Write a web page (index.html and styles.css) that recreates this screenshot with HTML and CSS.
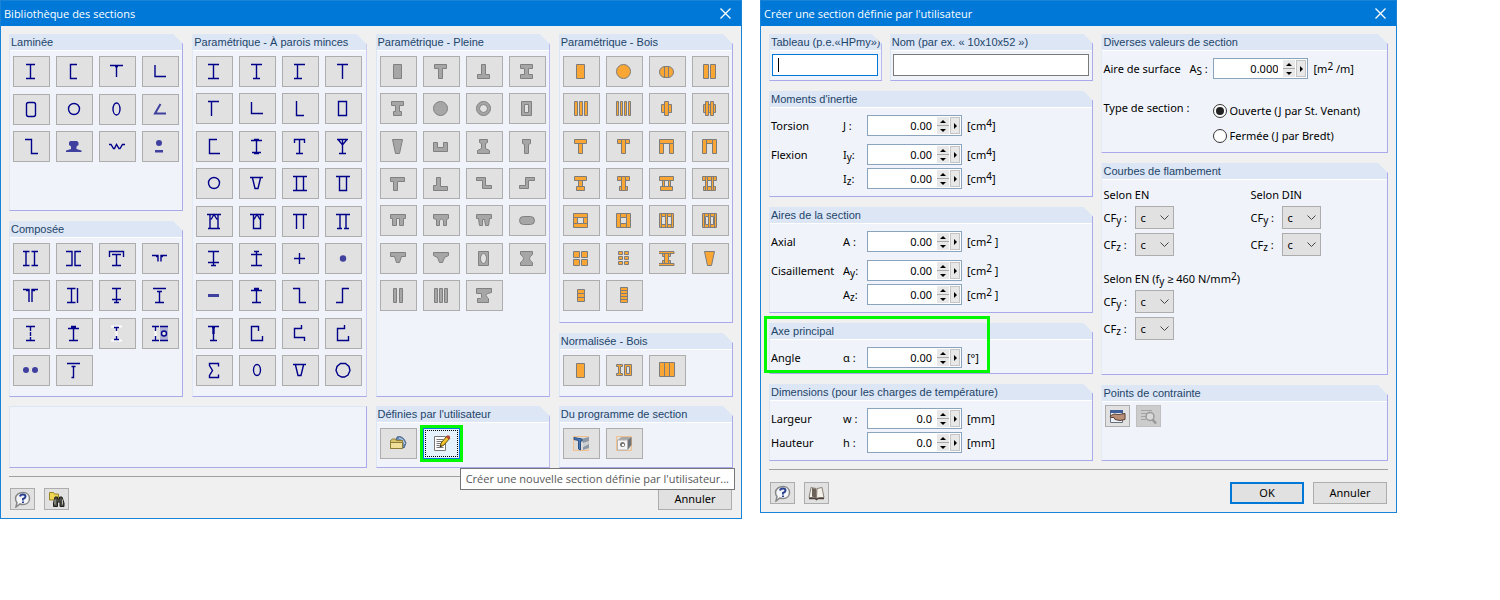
FILE: index.html
```html
<!DOCTYPE html>
<html lang="fr">
<head>
    <meta charset="UTF-8">
    <meta name="viewport" content="width=device-width, initial-scale=1.0">
    <title>Bibliothèque des sections</title>
    <link rel="stylesheet" href="styles.css">
</head>

<body>
    <!-- Section library -->
    <section class="dialog">
        <header class="titlebar">
            <h1>Bibliothèque des sections</h1>
            <button class="close" aria-label="Fermer"><svg viewBox="0 0 11 11"><path d="M.5 .5l10 10M10.5 .5l-10 10"/></svg></button>
        </header>

        <div class="library">
            <div class="stack">
                <div class="panel">
                    <h2>Laminée</h2>
                    <div class="tiles rows-3">
                        <button class="tile"><svg class="line" viewBox="0 0 19 19"><path d="M4 2.5h9M8.5 2.5v14M4 16.5h9"/></svg></button>
                        <button class="tile"><svg class="line" viewBox="0 0 19 19"><path d="M12 2.5H5.5v14H12"/></svg></button>
                        <button class="tile"><svg class="line" viewBox="0 0 19 19"><path d="M2 3.5h13M7 4.5h3M8.5 3.5V15"/></svg></button>
                        <button class="tile"><svg class="line" viewBox="0 0 19 19"><path d="M4 3v11.5h11"/></svg></button>
                        <button class="tile"><svg class="line" viewBox="0 0 19 19"><rect x="4.5" y="2.5" width="9" height="14" rx="2"/></svg></button>
                        <button class="tile"><svg class="line" viewBox="0 0 19 19"><circle cx="9" cy="9" r="5.5"/></svg></button>
                        <button class="tile"><svg class="line" viewBox="0 0 19 19"><ellipse cx="8.5" cy="9" rx="3.5" ry="6"/></svg></button>
                        <button class="tile"><svg class="line soft" viewBox="0 0 19 19"><path d="M9.5 4L4 13.5h11"/></svg></button>
                        <button class="tile"><svg class="line" viewBox="0 0 19 19"><path d="M3 2.5h6.5v14H16"/></svg></button>
                        <button class="tile"><svg class="blob" viewBox="0 0 19 19"><path d="M5 4h7l1.5 1.5V8l-2 1.5V12l5 1.5V15H1v-1.5L6 12V9.5L4 8V5.5z"/></svg></button>
                        <button class="tile"><svg class="line" viewBox="0 0 19 19"><path d="M1 7.5h2l2.500 4h1l2-4 2.500 4h1l2.500-4H17"/></svg></button>
                        <button class="tile"><svg class="blob" viewBox="0 0 19 19"><circle cx="8" cy="6" r="3"/><path d="M4 13h8v2.500H4z"/></svg></button>
                    </div>
                </div>
                <div class="panel grow">
                    <h2>Composée</h2>
                    <div class="tiles rows-4">
                        <button class="tile"><svg class="line" viewBox="0 0 19 19"><path d="M1 2.500h6.500M4 2.500v14M1 16.500h6.500M9.500 2.500H16M12.500 2.500v14M9.500 16.500H16"/></svg></button>
                        <button class="tile"><svg class="line" viewBox="0 0 19 19"><path d="M1 2.500h6v14H1M16 2.500h-6v14H16"/></svg></button>
                        <button class="tile"><svg class="line" viewBox="0 0 19 19"><path d="M1.500 8V2.500h14V8M4 5.500h9M8.500 5.500v11M4 16.500h9"/></svg></button>
                        <button class="tile"><svg class="line" viewBox="0 0 19 19"><path d="M1 6.500h6v6M16 6.500h-6v6M5 7.500h2M10 7.500h2"/></svg></button>
                        <button class="tile"><svg class="line" viewBox="0 0 19 19"><path d="M1 3.500h6V16M16 3.500h-6V16M4 4.500h3M10 4.500h3"/></svg></button>
                        <button class="tile"><svg class="line" viewBox="0 0 19 19"><path d="M2 2.500h8.500M6.500 2.500v14M2 16.500h8.500M12.500 2v15"/></svg></button>
                        <button class="tile"><svg class="line" viewBox="0 0 19 19"><path d="M4 2.500h9M8.500 2.500v14M4 13.500h9M6 16.500h5"/></svg></button>
                        <button class="tile"><svg class="line" viewBox="0 0 19 19"><path d="M2 2.500h13M6 5.500h5M8.500 5.500v11M4 16.500h9"/></svg></button>
                        <button class="tile"><svg class="line" viewBox="0 0 19 19"><path d="M4 2.500h9M4 16.500h9"/><path d="M8.500 3v13" stroke-dasharray="4 1"/></svg></button>
                        <button class="tile"><svg class="line" viewBox="0 0 19 19"><path d="M6 2.500h5M6 3.500h5M3 4.500h11M8.500 4.500v12M4 16.500h9"/></svg></button>
                        <button class="tile"><svg class="line" viewBox="0 0 19 19"><path class="white" d="M3 2.500h11M8.500 2v15M3 16.500h11"/><path d="M6 3.500h5M8.500 3.500V7M6 15.500h5M8.500 12v3"/></svg></button>
                        <button class="tile"><svg class="line" viewBox="0 0 19 19"><path class="tint" d="M9 2.500h8v14H9z"/><path class="white" d="M4.500 3v13"/><path d="M1 2.500h7M4.500 3v4M4.500 12v4M1 16.500h7M9 2.500h8M9 16.500h8"/><circle class="hole" cx="13" cy="9.500" r="2.500"/></svg></button>
                        <button class="tile"><svg class="blob" viewBox="0 0 19 19"><circle cx="4" cy="9" r="3"/><circle cx="13" cy="9" r="3"/></svg></button>
                        <button class="tile"><svg class="line" viewBox="0 0 19 19"><path d="M2 2.500h13M6.500 5.500h4M8.500 5.500v11h-2"/></svg></button>
                    </div>
                </div>
            </div>

            <div class="panel">
                <h2>Paramétrique - À parois minces</h2>
                <div class="tiles rows-9">
                    <button class="tile"><svg class="line" viewBox="0 0 19 19"><path d="M3 2.500h11M8.500 2.500v14M3 16.500h11"/></svg></button>
                    <button class="tile"><svg class="line" viewBox="0 0 19 19"><path d="M3 2.500h11M8.500 2.500v14M5 16.500h7"/></svg></button>
                    <button class="tile"><svg class="line" viewBox="0 0 19 19"><path d="M3 2.500h11M6.500 2.500v14M3 16.500h8"/></svg></button>
                    <button class="tile"><svg class="line" viewBox="0 0 19 19"><path d="M3 2.500h11M8.500 2.500V17"/></svg></button>
                    <button class="tile"><svg class="line" viewBox="0 0 19 19"><path d="M3 2.500h11M6.500 2.500V17"/></svg></button>
                    <button class="tile"><svg class="line" viewBox="0 0 19 19"><path d="M3.500 3v11.500H15"/></svg></button>
                    <button class="tile"><svg class="line" viewBox="0 0 19 19"><path d="M5.500 2v14.500H13"/></svg></button>
                    <button class="tile"><svg class="line" viewBox="0 0 19 19"><path d="M4.500 2.500h8v14h-8z"/></svg></button>
                    <button class="tile"><svg class="line" viewBox="0 0 19 19"><path d="M12 2.500H4.500v14H15"/></svg></button>
                    <button class="tile"><svg class="line" viewBox="0 0 19 19"><path d="M6 2.500h5M3 3.500h11M8.500 3.500v13M4 15.500h9M6 16.500h5"/></svg></button>
                    <button class="tile"><svg class="line" viewBox="0 0 19 19"><path d="M3.500 6V2.500h10V6M8.500 2.500v14M5 16.500h7"/></svg></button>
                    <button class="tile"><svg class="line" viewBox="0 0 19 19"><path d="M3 2.500h11M4.500 3l4 5 4-5M8.500 2.500v14M5 16.500h7"/></svg></button>
                    <button class="tile"><svg class="line" viewBox="0 0 19 19"><circle cx="9" cy="9" r="5.500"/></svg></button>
                    <button class="tile"><svg class="line" viewBox="0 0 19 19"><path d="M2 3.500h13M4.500 4L7 14.500h3L12.500 4"/></svg></button>
                    <button class="tile"><svg class="line" viewBox="0 0 19 19"><path d="M2 2.500h14M5.500 2.500v14M12.500 2.500v14M2 16.500h14"/></svg></button>
                    <button class="tile"><svg class="line" viewBox="0 0 19 19"><path d="M2 2.500h14M5.500 2.500v14h7v-14"/></svg></button>
                    <button class="tile"><svg class="line" viewBox="0 0 19 19"><path d="M2 2.500h14M5 2.500v14M13 2.500v14M3 16.500h12M6 7.500l3-5 3 5"/></svg></button>
                    <button class="tile"><svg class="line" viewBox="0 0 19 19"><path d="M2 2.500h14M5.500 2.500v14h7v-14M6 7.500l3-5 3 5"/></svg></button>
                    <button class="tile"><svg class="line" viewBox="0 0 19 19"><path d="M2 2.500h14M5.500 2.500V17M12.500 2.500V17"/></svg></button>
                    <button class="tile"><svg class="line" viewBox="0 0 19 19"><path d="M2 2.500h14M6 2.500v14M12 2.500v14M3 16.500h5M10 16.500h5"/></svg></button>
                    <button class="tile"><svg class="line" viewBox="0 0 19 19"><path d="M3 2.500h11M8.500 2.500v14M3 13.500h11M6 16.500h5"/></svg></button>
                    <button class="tile"><svg class="line" viewBox="0 0 19 19"><path d="M6 2.500h5M3 5.500h11M8.500 2.500v14M3 16.500h11"/></svg></button>
                    <button class="tile"><svg class="line" viewBox="0 0 19 19"><path d="M3 9.500h11M8.500 4v11"/></svg></button>
                    <button class="tile"><svg class="blob" viewBox="0 0 19 19"><circle cx="9" cy="9.500" r="3.200"/></svg></button>
                    <button class="tile"><svg class="blob" viewBox="0 0 19 19"><path d="M3 8h11v3H3z"/></svg></button>
                    <button class="tile"><svg class="line" viewBox="0 0 19 19"><path d="M6 2.500h5M6 3.500h5M3 4.500h11M8.500 4.500v12M4 16.500h9"/></svg></button>
                    <button class="tile"><svg class="line" viewBox="0 0 19 19"><path d="M2 2.500h6.500v14H15"/></svg></button>
                    <button class="tile"><svg class="line" viewBox="0 0 19 19"><path d="M15 2.500H8.500v14H2"/></svg></button>
                    <button class="tile"><svg class="line" viewBox="0 0 19 19"><path d="M3 2.500h11M7 3.500h3M8 4v6M9 4v6M8.500 2.500v14M5 16.500h7"/></svg></button>
                    <button class="tile"><svg class="line" viewBox="0 0 19 19"><path d="M10.500 7V2.500h-7v14h11V12"/></svg></button>
                    <button class="tile"><svg class="line" viewBox="0 0 19 19"><path d="M10.500 1v3.500h-7v9h10V17"/></svg></button>
                    <button class="tile"><svg class="line" viewBox="0 0 19 19"><path d="M10.500 1v3.500h-7v12h11V12"/></svg></button>
                    <button class="tile"><svg class="line" viewBox="0 0 19 19"><path d="M13.500 5.500v-3h-9v2l3 5-3 5v2h9v-3"/></svg></button>
                    <button class="tile"><svg class="line" viewBox="0 0 19 19"><ellipse cx="9" cy="9" rx="3.500" ry="5.500"/></svg></button>
                    <button class="tile"><svg class="line" viewBox="0 0 19 19"><path d="M2 3.500h13M4.500 4L7 14.500h3L12.500 4"/></svg></button>
                    <button class="tile"><svg class="line" viewBox="0 0 19 19"><path d="M6.500 2.500h5l3.500 3 1 4-2 4.500-3.500 2h-3L4 14 2 9.500l1-4z"/></svg></button>
                </div>
            </div>

            <div class="panel">
                <h2>Paramétrique - Pleine</h2>
                <div class="tiles rows-7">
                    <button class="tile"><svg class="solid" viewBox="0 0 19 19"><path d="M4.500 2.500h8v14h-8z"/></svg></button>
                    <button class="tile"><svg class="solid" viewBox="0 0 19 19"><path d="M2.500 2.500h12v4h-4v10h-4v-10h-4z"/></svg></button>
                    <button class="tile"><svg class="solid" viewBox="0 0 19 19"><path d="M6.500 2.500h4v10h4v4h-12v-4h4z"/></svg></button>
                    <button class="tile"><svg class="solid" viewBox="0 0 19 19"><path d="M2.500 2.500h12v4h-4v6h4v4h-12v-4h4v-6h-4z"/></svg></button>
                    <button class="tile"><svg class="solid" viewBox="0 0 19 19"><path d="M2.500 2.500h12v4h-4v6h2v4h-8v-4h2v-6h-4z"/></svg></button>
                    <button class="tile"><svg class="solid" viewBox="0 0 19 19"><circle cx="8.500" cy="9.500" r="7"/></svg></button>
                    <button class="tile"><svg class="solid" viewBox="0 0 19 19"><circle cx="8.500" cy="9.500" r="7"/><circle class="gap" cx="8.500" cy="9.500" r="4"/></svg></button>
                    <button class="tile"><svg class="solid" viewBox="0 0 19 19"><path d="M3.500 2.500h10v14h-10z"/><path class="gap" d="M6.500 5.500h4v8h-4z"/></svg></button>
                    <button class="tile"><svg class="solid" viewBox="0 0 19 19"><path d="M3.500 2.500h10l-3 14h-4z"/></svg></button>
                    <button class="tile"><svg class="solid" viewBox="0 0 19 19"><path d="M1.500 5.500h4v5h6v-5h4v9h-14z"/></svg></button>
                    <button class="tile"><svg class="solid" viewBox="0 0 19 19"><path d="M4.500 2.500h8v3l-2 1v5l4 2v3h-12v-3l4-2v-5l-2-1z"/></svg></button>
                    <button class="tile"><svg class="solid" viewBox="0 0 19 19"><path d="M4.500 2.500h8v4l-2 1v9h-4v-9l-2-1z"/></svg></button>
                    <button class="tile"><svg class="solid" viewBox="0 0 19 19"><path d="M1.500 3.500h14v4h-7v9h-4v-9h-3z"/></svg></button>
                    <button class="tile"><svg class="solid" viewBox="0 0 19 19"><path d="M4.500 3.500h4v9h7v4h-14v-5h3z"/></svg></button>
                    <button class="tile"><svg class="solid" viewBox="0 0 19 19"><path d="M1.500 3.500h9v8h6v3h-9v-8h-6z"/></svg></button>
                    <button class="tile"><svg class="solid" viewBox="0 0 19 19"><path d="M16.500 3.500h-9v8h-6v3h9v-8h6z"/></svg></button>
                    <button class="tile"><svg class="solid" viewBox="0 0 19 19"><path d="M1.500 3.500h15v4h-2v7h-4v-7h-3v7h-4v-7h-2z"/></svg></button>
                    <button class="tile"><svg class="solid" viewBox="0 0 19 19"><path d="M1.500 3.500h15v4l-2 1v6h-3v-5q-2-3-4 0v5h-3v-6l-3-1z"/></svg></button>
                    <button class="tile"><svg class="solid" viewBox="0 0 19 19"><path d="M1.500 3.500h15v4h-2l-1 7h-3l-1-6h-2v6h-3l-1-7h-2z"/></svg></button>
                    <button class="tile"><svg class="solid" viewBox="0 0 19 19"><rect x="1.500" y="5.500" width="15" height="8" rx="4"/></svg></button>
                    <button class="tile"><svg class="solid" viewBox="0 0 19 19"><path d="M1.500 3.500h15v4h-4l-2 6h-3l-2-6h-4z"/></svg></button>
                    <button class="tile"><svg class="solid" viewBox="0 0 19 19"><path d="M1.500 3.500h15v3l-4 2-2 5h-3l-2-5-4-2z"/></svg></button>
                    <button class="tile"><svg class="solid" viewBox="0 0 19 19"><path d="M3.500 2.500h10v14h-10z"/><ellipse class="gap" cx="8.500" cy="9.500" rx="3" ry="5"/></svg></button>
                    <button class="tile"><svg class="solid" viewBox="0 0 19 19"><path d="M2.500 2.500h12v3q-6 4 0 8v3h-12v-3q6-4 0-8z"/></svg></button>
                    <button class="tile"><svg class="solid" viewBox="0 0 19 19"><path d="M4.500 2.500h3v14h-3zM10.500 2.500h3v14h-3z"/></svg></button>
                    <button class="tile"><svg class="solid" viewBox="0 0 19 19"><path d="M2.500 2.500h3v14h-3zM7.500 2.500h3v14h-3zM12.500 2.500h3v14h-3z"/></svg></button>
                    <button class="tile"><svg class="solid" viewBox="0 0 19 19"><path d="M1.500 2.500h15v4l-4 1q-3 2 0 4l1 1v4h-11v-4h3l1-1v-4h-5z"/></svg></button>
                </div>
            </div>

            <div class="stack">
                <div class="panel">
                    <h2>Paramétrique - Bois</h2>
                    <div class="tiles rows-7">
                        <button class="tile"><svg class="wood" viewBox="0 0 19 19"><path d="M4.500 2.500h8v14h-8z"/></svg></button>
                        <button class="tile"><svg class="wood" viewBox="0 0 19 19"><circle cx="8.500" cy="9.500" r="7"/></svg></button>
                        <button class="tile"><svg class="wood" viewBox="0 0 19 19"><rect x="1.500" y="4.500" width="14" height="11" rx="5.500"/><path d="M6.500 4.500v11M10.500 4.500v11"/></svg></button>
                        <button class="tile"><svg class="wood" viewBox="0 0 19 19"><path d="M2.500 2.500h5v14h-5zM9.500 2.500h5v14h-5z"/></svg></button>
                        <button class="tile"><svg class="wood" viewBox="0 0 19 19"><path d="M2.500 2.500h3v14h-3zM7.500 2.500h3v14h-3zM12.500 2.500h3v14h-3z"/></svg></button>
                        <button class="tile"><svg class="wood" viewBox="0 0 19 19"><path d="M1.500 2.500h2v14h-2zM5.500 2.500h2v14h-2zM9.500 2.500h2v14h-2zM13.500 2.500h2v14h-2z"/></svg></button>
                        <button class="tile"><svg class="wood" viewBox="0 0 19 19"><path d="M3.500 5.500h10v8h-10z"/><path d="M6.500 2.500h4v14h-4z"/></svg></button>
                        <button class="tile"><svg class="wood" viewBox="0 0 19 19"><path d="M2.500 5.500h12v8h-12z"/><path d="M4.500 2.500h3v14h-3zM9.500 2.500h3v14h-3z"/></svg></button>
                        <button class="tile"><svg class="wood" viewBox="0 0 19 19"><path d="M2.500 2.500h12v4h-12zM6.500 6.500h4v10h-4z"/></svg></button>
                        <button class="tile"><svg class="wood" viewBox="0 0 19 19"><path d="M2.500 2.500h12v4h-12z"/><path d="M6.500 2.500h4v14h-4z"/></svg></button>
                        <button class="tile"><svg class="wood" viewBox="0 0 19 19"><path d="M1.500 2.500h14v4h-14zM1.500 6.500h4v10h-4zM11.500 6.500h4v10h-4z"/></svg></button>
                        <button class="tile"><svg class="wood" viewBox="0 0 19 19"><path d="M5.500 2.500h6v4h-6zM1.500 2.500h4v14h-4zM11.500 2.500h4v14h-4z"/></svg></button>
                        <button class="tile"><svg class="wood" viewBox="0 0 19 19"><path d="M2.500 2.500h12v4h-12zM6.500 6.500h4v6h-4zM4.500 12.500h8v4h-8z"/></svg></button>
                        <button class="tile"><svg class="wood" viewBox="0 0 19 19"><path d="M2.500 2.500h12v4h-12zM4.500 12.500h8v4h-8z"/><path d="M6.500 2.500h4v14h-4z"/></svg></button>
                        <button class="tile"><svg class="wood" viewBox="0 0 19 19"><path d="M1.500 2.500h14v4h-14zM2.500 12.500h12v4h-12zM4.500 6.500h2v6h-2zM10.500 6.500h2v6h-2z"/></svg></button>
                        <button class="tile"><svg class="wood" viewBox="0 0 19 19"><path d="M1.500 2.500h14v4h-14zM2.500 12.500h12v4h-12z"/><path d="M4.500 2.500h2v14h-2zM10.500 2.500h2v14h-2z"/></svg></button>
                        <button class="tile"><svg class="wood" viewBox="0 0 19 19"><path d="M1.500 2.500h14v14h-14zM1.500 6.500h14v6h-14z"/><path class="gap" d="M5.500 6.500h6v6h-6z"/></svg></button>
                        <button class="tile"><svg class="wood" viewBox="0 0 19 19"><path d="M1.500 2.500h14v14h-14zM5.500 2.500h6v14h-6z"/><path class="gap" d="M5.500 6.500h6v6h-6z"/></svg></button>
                        <button class="tile"><svg class="wood" viewBox="0 0 19 19"><path d="M1.500 2.500h14v14h-14zM3.500 2.500v14M7.500 2.500h2v14h-2zM13.500 2.500v14"/><path class="gap" d="M3.500 5.500h4v8h-4zM9.500 5.500h4v8h-4z"/></svg></button>
                        <button class="tile"><svg class="wood" viewBox="0 0 19 19"><path d="M1.500 2.500h14v14h-14zM3.500 2.500v14M7.500 2.500h2v14h-2zM13.500 2.500v14"/><path class="gap" d="M4.500 5.500h3v8h-3zM9.500 5.500h3v8h-3z"/></svg></button>
                        <button class="tile"><svg class="wood" viewBox="0 0 19 19"><path d="M1.500 2.500h6v6h-6zM9.500 2.500h6v6h-6zM1.500 10.500h6v6h-6zM9.500 10.500h6v6h-6z"/></svg></button>
                        <button class="tile"><svg class="wood" viewBox="0 0 19 19"><path d="M3.500 2.500h4v3h-4zM9.500 2.500h4v3h-4zM3.500 7.500h4v3h-4zM9.500 7.500h4v3h-4zM3.500 12.500h4v3h-4zM9.500 12.500h4v3h-4z"/></svg></button>
                        <button class="tile"><svg class="wood" viewBox="0 0 19 19"><path d="M4.500 4.500h8v3h-8zM4.500 11.500h8v3h-8z"/><path d="M6.500 4.500h4v10h-4z"/><path d="M1 2.500h15v2H1M1 16.500h15v-2H1"/></svg></button>
                        <button class="tile"><svg class="wood" viewBox="0 0 19 19"><path d="M3.500 2.500h10l-3 14h-4z"/></svg></button>
                        <button class="tile"><svg class="wood" viewBox="0 0 19 19"><path d="M5.500 3.500h7v12h-7zM5.500 7.500h7v4h-7z"/></svg></button>
                        <button class="tile"><svg class="wood" viewBox="0 0 19 19"><path d="M5.500 1.500h7v15h-7zM5.500 4.500h7M5.500 7.500h7M5.500 10.500h7M5.500 13.500h7"/></svg></button>
                    </div>
                </div>
                <div class="panel grow">
                    <h2>Normalisée - Bois</h2>
                    <div class="tiles">
                        <button class="tile"><svg class="wood" viewBox="0 0 19 19"><path d="M4.500 2.500h8v14h-8z"/></svg></button>
                        <button class="tile"><svg class="wood" viewBox="0 0 19 19"><path d="M1.500 3.500h6v2h-2v7h2v2h-6v-2h2v-7h-2z"/><path d="M9.500 3.500h7v11h-7z"/><path class="gap" d="M11.500 5.500h3v7h-3z"/></svg></button>
                        <button class="tile"><svg class="wood" viewBox="0 0 19 19"><path d="M1.500 1.500h15v14h-15zM6.500 1.500h5v14h-5z"/></svg></button>
                    </div>
                </div>
            </div>

            <div class="panel blank"></div>
            <div class="panel">
                <h2>Définies par l'utilisateur</h2>
                <div class="tiles">
                    <button class="tile" aria-label="Ouvrir"><svg viewBox="0 0 19 19">
                        <path d="M8 3q6-2 9 6l-2 5-8-6z" fill="#6f8fb5" stroke="#44618a"/>
                        <path d="M10 4q4 0 6 6" fill="none" stroke="#c9d9ea"/>
                        <path d="M1.500 6.500l2-1.500h3l1 1.500h6v8h-12z" fill="#d9c46c" stroke="#8d7c3c"/>
                        <path d="M1.500 14.500v-6h12v6z" fill="#efdf98" stroke="#8d7c3c"/>
                    </svg></button>
                    <button class="tile active" aria-label="Nouvelle section" aria-describedby="new-tip"><svg viewBox="0 0 19 19">
                        <path d="M2.500 2.500h11v14h-11z" fill="#fff" stroke="#777"/>
                        <path d="M4.500 5.500h7M4.500 7.500h6M4.500 9.500h4M4.500 11.500h3M4.500 13.500h7" stroke="#777"/>
                        <path d="M8 13l1-4 6-7 3 2-6 7z" fill="#f0c52c" stroke="#5d4a14"/>
                        <path d="M14 3l1-1.500h2l1 1V4l-1 1.500z" fill="#b8443a"/>
                        <path d="M8 13l.5-2 1.500 1z" fill="#222"/>
                    </svg></button>
                </div>
            </div>
            <div class="panel">
                <h2>Du programme de section</h2>
                <div class="tiles">
                    <button class="tile" aria-label="Profil mince"><svg viewBox="0 0 19 19">
                        <path d="M1.500 2.500h15v14h-15z" fill="#dedad5" stroke="#f0c08e"/>
                        <path d="M9 5l8-2v4l-6 2zM11 13l6-3v4l-6 2z" fill="#8d98a6"/>
                        <path d="M11 9.500l6-2v2l-6 3z" fill="#c9ced6"/>
                        <path d="M2 3.500l8 1.500v2L8.500 7v9l-2-1V6.500L2 5.500z" fill="#4a78b5" stroke="#2b5288"/>
                    </svg></button>
                    <button class="tile" aria-label="Profil massif"><svg viewBox="0 0 19 19">
                        <path d="M1.500 2.500h15v14h-15z" fill="#e3dfda" stroke="#f0c08e"/>
                        <path d="M2.500 6l4-3h10l-4 3z" fill="#a7a7a7"/>
                        <path d="M12.500 6l4-3v8l-4 5z" fill="#707478"/>
                        <path d="M2.500 6h10v10h-10z" fill="#f4f4f4" stroke="#b4b4b4"/>
                        <circle cx="7.500" cy="10.500" r="2.500" fill="#777"/>
                        <path d="M7 10h2v2H7z" fill="#fff"/>
                    </svg></button>
                </div>
            </div>
        </div>

        <footer class="actions">
            <button class="tool" aria-label="Aide"><svg viewBox="0 0 19 17">
                <path d="M10 1.500c4 0 6.500 2.500 6.500 6S14 13.500 10 13.500c-1 0-2 0-3-.5L3 16l1-4.500C3 10.500 2.500 9 2.500 7.500c0-3.500 3.500-6 7.500-6z" fill="#f4f6fa" stroke="#888" stroke-width="1.500"/>
                <path d="M7 5.500Q7.500 3.500 10 3.500t2.500 2Q12.500 7 10 8v1.500" fill="none" stroke="#2a3f8f" stroke-width="2"/>
                <path d="M9 10.500h2v1.500H9z" fill="#2a3f8f"/>
            </svg></button>
            <button class="tool" aria-label="Rechercher"><svg viewBox="0 0 19 17">
                <path d="M2.500 3V1.500h4L7.500 3h4v6h-9z" fill="#ecd654" stroke="#9a8627"/>
                <path d="M8 6h2.500v2h2V6H15l2 6v3.500h-4V11h-2.500v4.500h-4V12z" fill="#4b4b45" stroke="#1f1f1f"/>
                <path d="M8 8.500v5M15.500 8.500v5" stroke="#b8b8a8"/>
            </svg></button>
            <button class="push">Annuler</button>
        </footer>
        <div class="tooltip" id="new-tip" role="tooltip">Créer une nouvelle section définie par l'utilisateur...</div>
    </section>

    <!-- User-defined section -->
    <form class="dialog">
        <header class="titlebar">
            <h1>Créer une section définie par l'utilisateur</h1>
            <button type="button" class="close" aria-label="Fermer"><svg viewBox="0 0 11 11"><path d="M.5 .5l10 10M10.5 .5l-10 10"/></svg></button>
        </header>

        <div class="editor">
            <div class="column">
                <div class="names">
                    <div class="panel">
                        <h2><label for="table">Tableau (p.e.«HPmy»)</label></h2>
                        <div class="text-field focused"><span class="caret"></span><input type="text" id="table"></div>
                    </div>
                    <div class="panel">
                        <h2><label for="name">Nom (par ex. « 10x10x52 »)</label></h2>
                        <div class="text-field"><input type="text" id="name"></div>
                    </div>
                </div>

                <div class="panel">
                    <h2>Moments d'inertie</h2>
                    <div class="fields">
                        <div class="field">
                            <label for="torsion"><span class="caption">Torsion</span><span class="symbol">J :</span></label>
                            <span class="spinner"><input type="text" id="torsion" value="0.00"><span class="arrows"><button type="button" class="up" aria-label="Plus"></button><button type="button" class="down" aria-label="Moins"></button></span><button type="button" class="more" aria-label="Options"></button></span>
                            <span class="unit">[cm<sup>4</sup>]</span>
                        </div>
                        <div class="field spaced">
                            <label for="iy"><span class="caption">Flexion</span><span class="symbol">I<sub>y</sub>:</span></label>
                            <span class="spinner"><input type="text" id="iy" value="0.00"><span class="arrows"><button type="button" class="up" aria-label="Plus"></button><button type="button" class="down" aria-label="Moins"></button></span><button type="button" class="more" aria-label="Options"></button></span>
                            <span class="unit">[cm<sup>4</sup>]</span>
                        </div>
                        <div class="field">
                            <label for="iz"><span class="caption"></span><span class="symbol">I<sub>z</sub>:</span></label>
                            <span class="spinner"><input type="text" id="iz" value="0.00"><span class="arrows"><button type="button" class="up" aria-label="Plus"></button><button type="button" class="down" aria-label="Moins"></button></span><button type="button" class="more" aria-label="Options"></button></span>
                            <span class="unit">[cm<sup>4</sup>]</span>
                        </div>
                    </div>
                </div>

                <div class="panel">
                    <h2>Aires de la section</h2>
                    <div class="fields">
                        <div class="field">
                            <label for="axial"><span class="caption">Axial</span><span class="symbol">A :</span></label>
                            <span class="spinner"><input type="text" id="axial" value="0.00"><span class="arrows"><button type="button" class="up" aria-label="Plus"></button><button type="button" class="down" aria-label="Moins"></button></span><button type="button" class="more" aria-label="Options"></button></span>
                            <span class="unit">[cm<sup>2</sup> ]</span>
                        </div>
                        <div class="field spaced">
                            <label for="ay"><span class="caption">Cisaillement</span><span class="symbol">A<sub>y</sub>:</span></label>
                            <span class="spinner"><input type="text" id="ay" value="0.00"><span class="arrows"><button type="button" class="up" aria-label="Plus"></button><button type="button" class="down" aria-label="Moins"></button></span><button type="button" class="more" aria-label="Options"></button></span>
                            <span class="unit">[cm<sup>2</sup> ]</span>
                        </div>
                        <div class="field">
                            <label for="az"><span class="caption"></span><span class="symbol">A<sub>z</sub>:</span></label>
                            <span class="spinner"><input type="text" id="az" value="0.00"><span class="arrows"><button type="button" class="up" aria-label="Plus"></button><button type="button" class="down" aria-label="Moins"></button></span><button type="button" class="more" aria-label="Options"></button></span>
                            <span class="unit">[cm<sup>2</sup> ]</span>
                        </div>
                    </div>
                </div>

                <div class="marked">
                    <div class="panel">
                        <h2>Axe principal</h2>
                        <div class="fields short">
                            <div class="field">
                                <label for="angle"><span class="caption">Angle</span><span class="symbol">α :</span></label>
                                <span class="spinner"><input type="text" id="angle" value="0.00"><span class="arrows"><button type="button" class="up" aria-label="Plus"></button><button type="button" class="down" aria-label="Moins"></button></span><button type="button" class="more" aria-label="Options"></button></span>
                                <span class="unit">[°]</span>
                            </div>
                        </div>
                    </div>
                    <span class="mark"></span>
                </div>

                <div class="panel">
                    <h2>Dimensions (pour les charges de température)</h2>
                    <div class="fields">
                        <div class="field">
                            <label for="width"><span class="caption">Largeur</span><span class="symbol">w :</span></label>
                            <span class="spinner"><input type="text" id="width" value="0.0"><span class="arrows"><button type="button" class="up" aria-label="Plus"></button><button type="button" class="down" aria-label="Moins"></button></span><button type="button" class="more" aria-label="Options"></button></span>
                            <span class="unit">[mm]</span>
                        </div>
                        <div class="field">
                            <label for="height"><span class="caption">Hauteur</span><span class="symbol">h :</span></label>
                            <span class="spinner"><input type="text" id="height" value="0.0"><span class="arrows"><button type="button" class="up" aria-label="Plus"></button><button type="button" class="down" aria-label="Moins"></button></span><button type="button" class="more" aria-label="Options"></button></span>
                            <span class="unit">[mm]</span>
                        </div>
                    </div>
                </div>
            </div>

            <div class="column">
                <div class="panel">
                    <h2>Diverses valeurs de section</h2>
                    <div class="fields misc">
                        <div class="field">
                            <label for="surface"><span class="caption wide">Aire de surface</span><span class="symbol">A<sub>S</sub> :</span></label>
                            <span class="spinner"><input type="text" id="surface" value="0.000"><span class="arrows"><button type="button" class="up" aria-label="Plus"></button><button type="button" class="down" aria-label="Moins"></button></span><button type="button" class="more" aria-label="Options"></button></span>
                            <span class="unit">[m<sup>2</sup> /m]</span>
                        </div>
                        <div class="kind" role="radiogroup" aria-labelledby="kind-label">
                            <span class="kind-label" id="kind-label">Type de section :</span>
                            <div class="radios">
                                <label><input type="radio" name="kind" value="open" checked>Ouverte (J par St. Venant)</label>
                                <label><input type="radio" name="kind" value="closed">Fermée (J par Bredt)</label>
                            </div>
                        </div>
                    </div>
                </div>

                <div class="panel grow">
                    <h2>Courbes de flambement</h2>
                    <div class="curves">
                        <div class="curve">
                            <p>Selon EN</p>
                            <label><span>CF<sub>y</sub> :</span><select><option>c</option></select></label>
                            <label><span>CF<sub>z</sub> :</span><select><option>c</option></select></label>
                        </div>
                        <div class="curve">
                            <p>Selon DIN</p>
                            <label><span>CF<sub>y</sub> :</span><select><option>c</option></select></label>
                            <label><span>CF<sub>z</sub> :</span><select><option>c</option></select></label>
                        </div>
                        <div class="curve">
                            <p>Selon EN (f<sub>y</sub> ≥ 460 N/mm<sup>2</sup>)</p>
                            <label><span>CF<sub>y</sub> :</span><select><option>c</option></select></label>
                            <label><span>CF<sub>z</sub> :</span><select><option>c</option></select></label>
                        </div>
                    </div>
                </div>

                <div class="panel">
                    <h2>Points de contrainte</h2>
                    <div class="tools">
                        <button type="button" class="tool" aria-label="Modifier"><svg viewBox="0 0 19 17">
                            <path d="M2.500 3.500h12v11h-12z" fill="#eef2f8" stroke="#66707e"/>
                            <path d="M2 2h13v3H2z" fill="#3f5f9a"/>
                            <path d="M2 8l4-2 5 .5 6-1v6l-5 1-5-1-1-2H3z" fill="#b98f78" stroke="#5a4034"/>
                        </svg></button>
                        <button type="button" class="tool off" aria-label="Afficher" disabled><svg viewBox="0 0 19 17">
                            <path d="M2 2.500h11M2 5.500h9M2 8.500h5M2 11.500h5" stroke="#a4a4a4"/>
                            <circle cx="11" cy="8.500" r="4" fill="#d9d9d9" stroke="#999" stroke-width="1.500"/>
                            <path d="M13.500 11.500l3.500 4" stroke="#999" stroke-width="2.500"/>
                        </svg></button>
                    </div>
                </div>
            </div>
        </div>

        <footer class="actions">
            <button type="button" class="tool" aria-label="Aide"><svg viewBox="0 0 19 17">
                <path d="M10 1.500c4 0 6.500 2.500 6.500 6S14 13.500 10 13.500c-1 0-2 0-3-.5L3 16l1-4.500C3 10.500 2.500 9 2.500 7.500c0-3.500 3.500-6 7.500-6z" fill="#f4f6fa" stroke="#888" stroke-width="1.500"/>
                <path d="M7 5.500Q7.500 3.500 10 3.500t2.500 2Q12.500 7 10 8v1.500" fill="none" stroke="#2a3f8f" stroke-width="2"/>
                <path d="M9 10.500h2v1.500H9z" fill="#2a3f8f"/>
            </svg></button>
            <button type="button" class="tool" aria-label="Bibliothèque"><svg viewBox="0 0 19 17">
                <path d="M2 12.500L4 2.500l5 1 .5 10-3-1zM17 12.500l-2-10-5 1-.5 10 3-1z" fill="#f3f0ea" stroke="#8a8078"/>
                <path d="M5 3l4 1v9l-4-1.500z" fill="#6d625a"/>
                <path d="M2 13.500h6l1.500 1 1.500-1h6" fill="none" stroke="#4a4038" stroke-width="1.500"/>
            </svg></button>
            <button type="submit" class="push primary">OK</button>
            <button type="button" class="push">Annuler</button>
        </footer>
    </form>
</body>
</html>
```
FILE: styles.css
```css
* {
    box-sizing: border-box;
}

body {
    display: grid;
    grid-template-columns: minmax(0, 742fr) minmax(0, 637fr);
    align-items: start;
    gap: 18px;
    margin: 0;
    padding-right: 103px;
    background-color: #fff;
    color: #000;
    font-family: "Noto Sans", Tahoma, sans-serif;
    font-size: 11px;
    line-height: 14px;
}

h1, h2, p {
    margin: 0;
    font-weight: normal;
}

button, input, select {
    margin: 0;
    padding: 0;
    font: inherit;
    color: inherit;
}

/* Dialog frame */
.dialog {
    position: relative;
    border: 1px solid #1883d7;
    background-color: #f0f0f0;
}

.titlebar {
    display: flex;
    align-items: center;
    justify-content: space-between;
    height: 25px;
    padding: 0 10px 0 3px;
    background-color: #0078d7;
    color: #fff;
}

.titlebar h1 {
    font-family: "Open Sans", "Segoe UI", sans-serif;
    font-size: 11px;
}

.close {
    display: flex;
    border: none;
    background: none;
}

.close svg {
    width: 11px;
    height: 11px;
    stroke: #fff;
    stroke-width: 1.3;
}

/* Group boxes with a cut corner */
.panel {
    border: 1px solid #a9a9ec;
    border-top: none;
    border-left-color: #dce6f5;
    background-color: #f0f4fa;
    clip-path: polygon(0 0, calc(100% - 10px) 0, 100% 10px, 100% 100%, 0 100%);
}

.panel h2 {
    height: 17px;
    padding-left: 1px;
    border-bottom: 1px solid #fff;
    background-color: #dce6f5;
    color: #1c4469;
    font-family: "Liberation Sans", Arial, sans-serif;
    font-size: 11px;
    line-height: 16px;
    white-space: nowrap;
}

.blank {
    grid-column: span 2;
    border-top: 1px solid #dce6f5;
    clip-path: none;
}

.grow {
    flex: 1;
}

/* Library */
.library {
    display: grid;
    grid-template-columns: repeat(4, minmax(0, 1fr));
    gap: 9px;
    margin: 0 8px;
    padding: 8px 0;
    border-bottom: 1px solid #a0a0a0;
}

.stack {
    display: flex;
    flex-direction: column;
    gap: 10px;
}

.tiles {
    display: grid;
    grid-template-columns: repeat(4, 37px);
    justify-content: space-between;
    align-content: space-between;
    margin: 5px 3px 8px;
}

.rows-3 {
    min-height: 106px;
    margin-bottom: 48px;
}

.rows-4 {
    min-height: 143px;
    margin-bottom: 10px;
}

.rows-7 {
    min-height: 255px;
    margin-bottom: 11px;
}

.rows-9 {
    min-height: 330px;
    margin-bottom: 10px;
}

.tile {
    display: flex;
    align-items: center;
    justify-content: center;
    height: 31px;
    border: 1px solid #adadad;
    background-color: #e1e1e1;
}

.tile svg {
    width: 19px;
    height: 19px;
}

.tile.active {
    border: 1px solid #0078d7;
    background-color: #e5f1fb;
    box-shadow: 0 0 0 3px #00f800;
    outline: 1px dotted #000;
    outline-offset: -3px;
}

.line {
    fill: none;
    stroke: #00008b;
    stroke-width: 1.4;
}

.line .white {
    stroke: #fff;
    stroke-width: 2;
}

.line .tint {
    fill: #b0b0d4;
    stroke: none;
}

.line .hole {
    fill: #e1e1e1;
}

.soft {
    stroke: #40409f;
    stroke-width: 2;
}

.blob {
    fill: #40409f;
}

.solid {
    fill: #a6a6a6;
    stroke: #808080;
}

.wood {
    fill: #faa634;
    stroke: #7c7c7c;
}

.gap {
    fill: #e1e1e1;
}

.tooltip {
    position: absolute;
    right: 6px;
    bottom: 28px;
    padding: 2px 5px;
    border: 1px solid #767676;
    background-color: #fff;
    color: #575757;
    font-family: "Open Sans", "Segoe UI", sans-serif;
    font-size: 11px;
    line-height: 16px;
    white-space: nowrap;
}

/* Bottom bar */
.actions {
    display: flex;
    align-items: center;
    gap: 9px;
    margin: 0 9px;
    padding: 11px 0 8px;
}

.tool {
    display: flex;
    align-items: center;
    justify-content: center;
    width: 25px;
    height: 22px;
    border: 1px solid #adadad;
    background-color: #e1e1e1;
}

.tool svg {
    width: 19px;
    height: 17px;
}

.tool.off {
    border-color: #bfbfbf;
    background-color: #ccc;
}

.push {
    width: 74px;
    height: 22px;
    border: 1px solid #adadad;
    background-color: #e1e1e1;
}

.tool + .push {
    margin-left: auto;
}

.primary {
    border: 2px solid #0078d7;
}

/* Section editor */
.editor {
    display: grid;
    grid-template-columns: minmax(0, 325fr) minmax(0, 287fr);
    gap: 8px;
    margin: 0 8px 1px;
    padding: 8px 0;
    border-bottom: 1px solid #a0a0a0;
}

.column {
    display: flex;
    flex-direction: column;
    gap: 10px;
}

.names {
    display: grid;
    grid-template-columns: minmax(0, 113fr) minmax(0, 204fr);
    gap: 8px;
}

.text-field {
    display: flex;
    align-items: center;
    height: 22px;
    margin: 3px 3px 4px 2px;
    padding: 0 5px;
    border: 1px solid #7a7a7a;
    background-color: #fff;
}

.text-field input {
    flex: 1;
    min-width: 0;
    border: none;
    outline: none;
    background: none;
}

.focused {
    border-color: #0078d7;
}

.caret {
    width: 1px;
    height: 14px;
    background-color: #000;
}

.fields {
    display: flex;
    flex-direction: column;
    gap: 3px;
    padding: 7px 1px;
}

.short {
    padding-bottom: 5px;
}

.misc {
    padding-bottom: 9px;
}

.field {
    display: flex;
    align-items: center;
}

.spaced {
    margin-top: 5px;
}

.field label {
    display: flex;
}

.caption {
    width: 72px;
}

.wide {
    width: 86px;
}

.symbol {
    width: 24px;
    white-space: nowrap;
}

sub, sup {
    font-size: 10px;
    line-height: 0;
}

sub {
    vertical-align: -2px;
}

sup {
    vertical-align: 3px;
}

.unit {
    margin-left: 5px;
    white-space: nowrap;
}

.spinner {
    display: flex;
    align-items: stretch;
    gap: 1px;
    width: 95px;
    height: 21px;
    padding: 1px;
    border: 1px solid #8aa4bd;
    background-color: #fff;
}

.spinner input {
    flex: 1;
    min-width: 0;
    padding-right: 4px;
    border: none;
    background: none;
    text-align: right;
}

.arrows {
    display: flex;
    flex-direction: column;
    width: 12px;
    gap: 1px;
    background-color: #a8a8a8;
}

.arrows button, .more {
    display: flex;
    align-items: center;
    justify-content: center;
    flex: 1;
    border: none;
    background-color: #e8e8e8;
}

.more {
    flex: none;
    width: 10px;
    border: 1px solid #c4c4c4;
}

.up::before, .down::before, .more::before {
    content: "";
    border: 3px solid transparent;
}

.up::before {
    border-top: none;
    border-bottom-color: #000;
}

.down::before {
    border-bottom: none;
    border-top-color: #000;
}

.more::before {
    border-right: none;
    border-left-color: #000;
}

/* Green frame round the angle field */
.marked {
    position: relative;
}

.mark {
    position: absolute;
    top: -7px;
    bottom: 1px;
    left: -5px;
    width: 226px;
    border: 3px solid #00f800;
    pointer-events: none;
}

.kind {
    display: flex;
    margin-top: 18px;
}

.kind-label {
    width: 110px;
    padding-top: 1px;
}

.radios {
    display: flex;
    flex-direction: column;
    gap: 11px;
    padding-top: 4px;
}

.radios label {
    display: flex;
    align-items: center;
    gap: 2px;
    white-space: nowrap;
}

.radios input {
    display: flex;
    align-items: center;
    justify-content: center;
    width: 14px;
    height: 14px;
    border: 1px solid #333;
    border-radius: 50%;
    background-color: #fff;
    appearance: none;
}

.radios input:checked::before {
    content: "";
    width: 8px;
    height: 8px;
    border-radius: 50%;
    background-color: #222;
}

.curves {
    display: grid;
    grid-template-columns: 147px 1fr;
    gap: 16px 0;
    padding: 8px 1px;
}

.curve {
    display: flex;
    flex-direction: column;
    gap: 4px;
    white-space: nowrap;
}

.curve label {
    display: flex;
    align-items: center;
}

.curve label span {
    width: 32px;
}

.curve select {
    width: 39px;
    height: 23px;
    padding-left: 4px;
    border: 1px solid #adadad;
    background: #e1e1e1 url("data:image/svg+xml,%3Csvg xmlns='http://www.w3.org/2000/svg' width='9' height='6'%3E%3Cpath d='M.5.5l4 4 4-4' fill='none' stroke='%23444'/%3E%3C/svg%3E") no-repeat right 4px center;
    appearance: none;
}

.tools {
    display: flex;
    gap: 6px;
    padding: 3px 3px 33px;
}
```
